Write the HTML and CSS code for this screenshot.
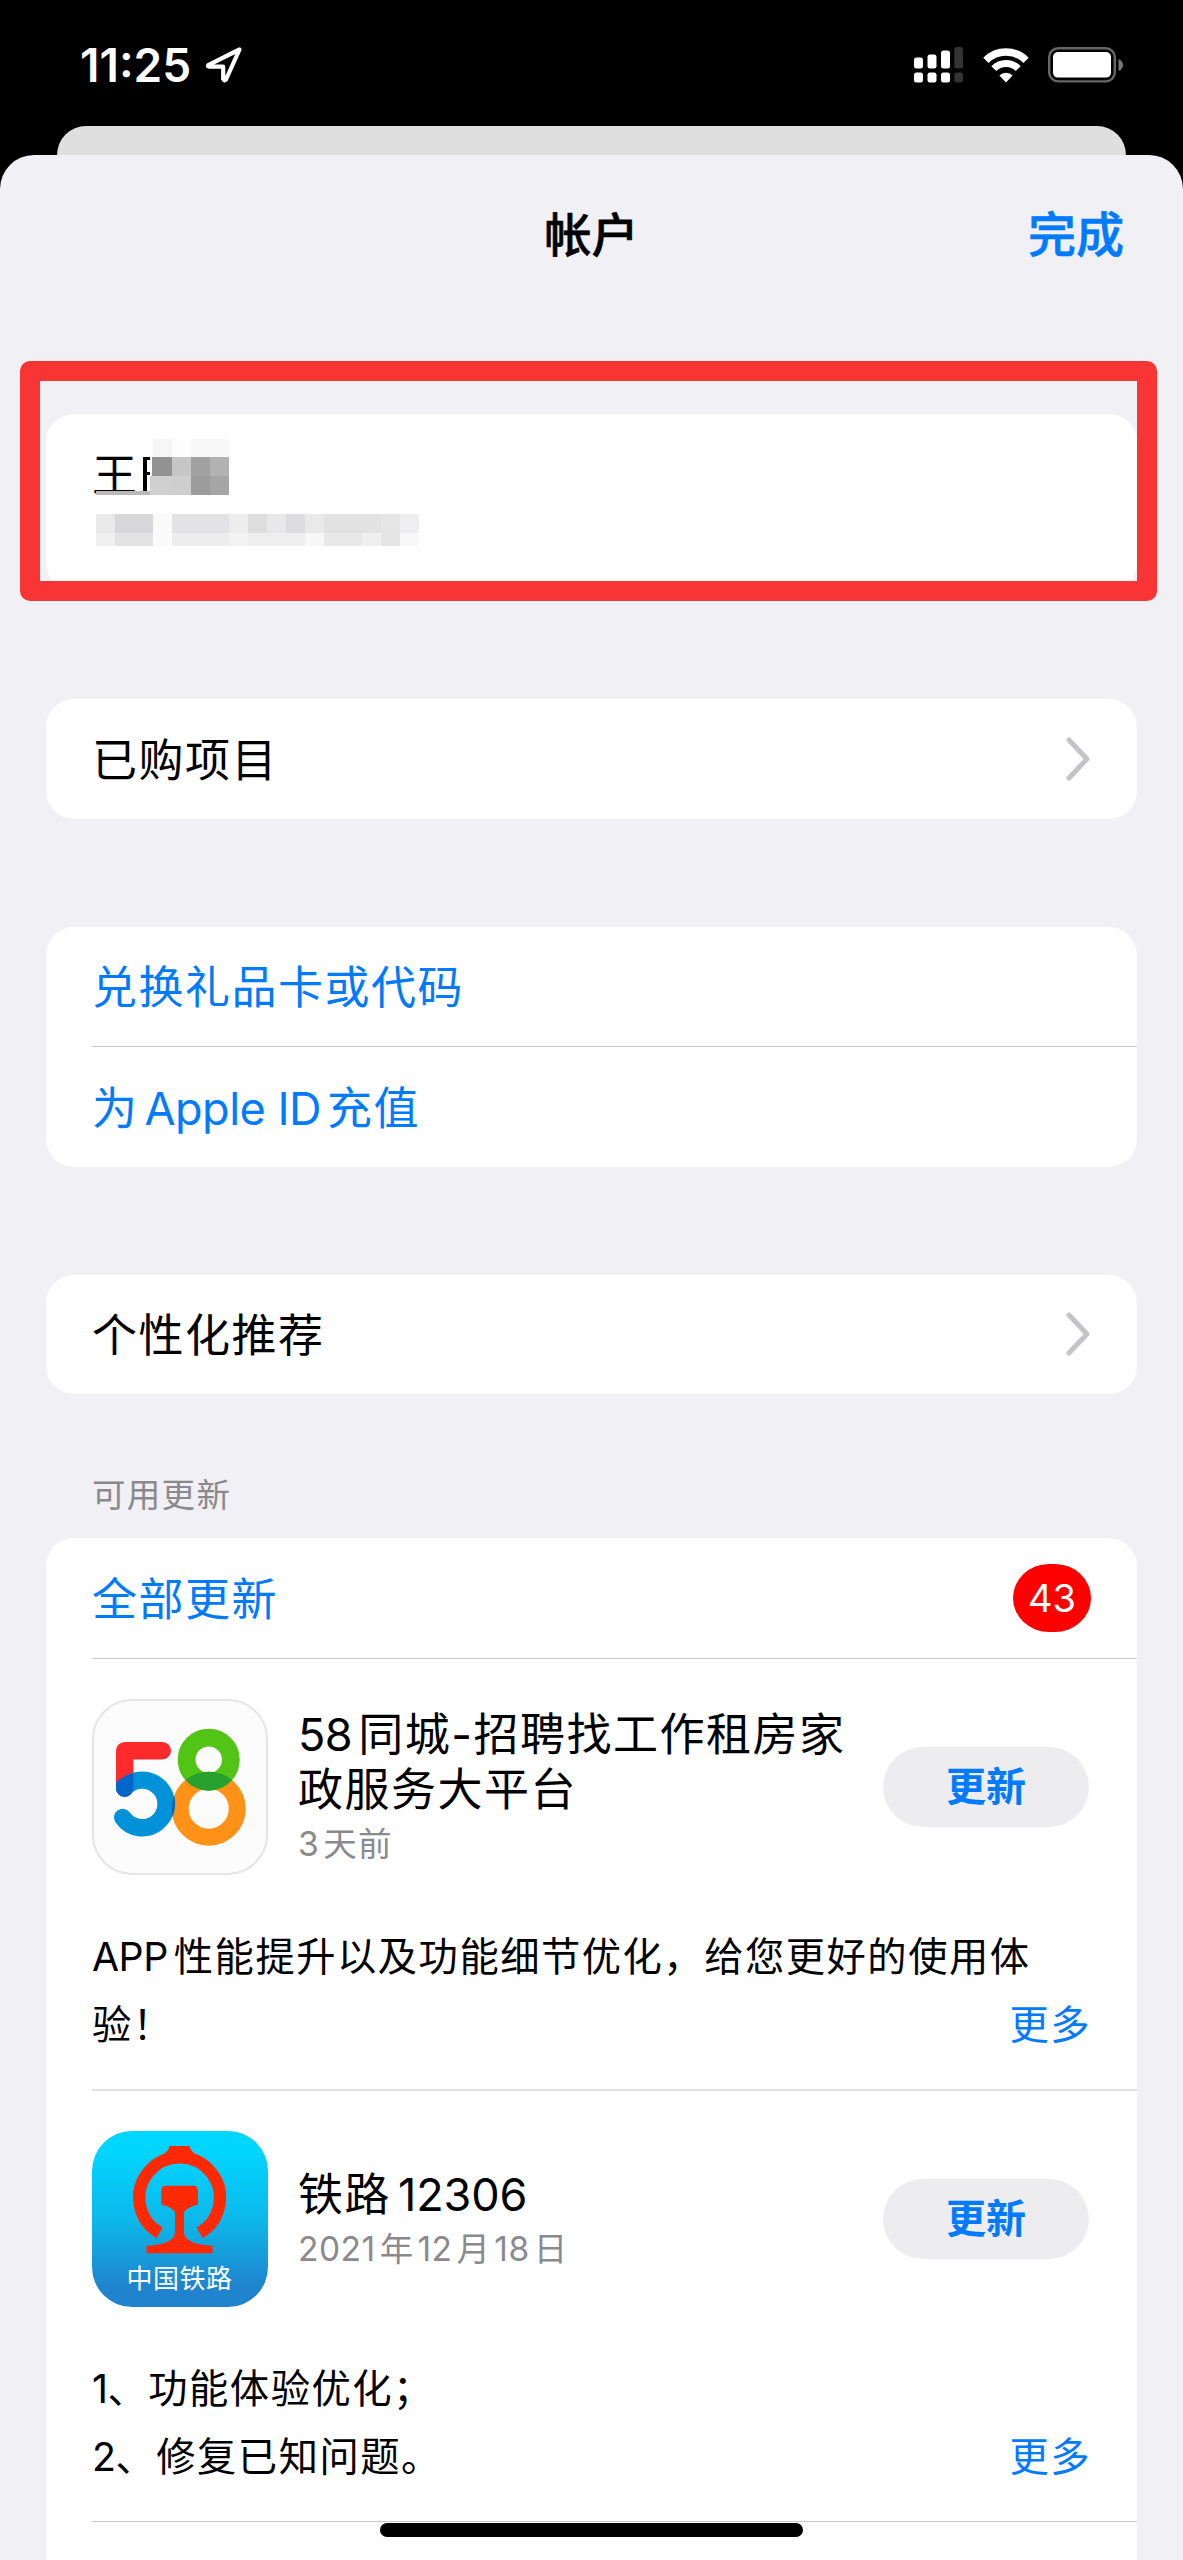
FILE: index.html
```html
<!DOCTYPE html>
<html lang="zh-CN">
<head>
    <meta charset="UTF-8">
    <meta name="viewport" content="width=device-width, initial-scale=1.0">
    <title>帐户</title>
    <link rel="stylesheet" href="styles.css">
</head>
<body>

    <!-- 状态栏 -->
    <div class="status-bar">
        <span class="time">11:25</span>
        <svg class="location" width="38" height="36" viewBox="0 0 38 36">
            <path d="M34.5 2.5L3.2 18.2Q2.2 19.3 4 19.7H18.2V32Q19.3 34.5 21 32.5Z" fill="none" stroke="#fff" stroke-width="4.2" stroke-linejoin="round"/>
        </svg>
        <div class="status-icons">
            <svg width="49" height="36" viewBox="0 0 49 36" fill="#fff">
                <rect x="0" y="10.5" width="9" height="11" rx="2.5"/>
                <rect x="13.5" y="7.5" width="9" height="14" rx="2.5"/>
                <rect x="27" y="3.5" width="9" height="18" rx="2.5"/>
                <rect x="40.3" y="0" width="8.7" height="21.5" rx="2.5" fill="#333"/>
                <rect x="0" y="25.5" width="9" height="10" rx="2.5"/>
                <rect x="13.5" y="25.5" width="9" height="10" rx="2.5"/>
                <rect x="27" y="25.5" width="9" height="10" rx="2.5"/>
                <rect x="40.3" y="25.5" width="8.7" height="10" rx="2.5" fill="#333"/>
            </svg>
            <svg class="wifi" width="46" height="35" viewBox="0 0 46 35">
                <path d="M2.9 12.3A28.5 28.5 0 0 1 43.1 12.3" fill="none" stroke="#fff" stroke-width="7.4"/>
                <path d="M10.8 20.6A17.2 17.2 0 0 1 35.2 20.6" fill="none" stroke="#fff" stroke-width="7"/>
                <path d="M23 34.5L16.4 27.6A9 9 0 0 1 29.6 27.6Z" fill="#fff"/>
            </svg>
            <svg class="battery" width="75" height="36" viewBox="0 0 75 36">
                <rect x="1.2" y="1.2" width="65.6" height="33.2" rx="9" fill="none" stroke="#666" stroke-width="2.4"/>
                <rect x="5" y="5" width="58" height="25.6" rx="5" fill="#fff"/>
                <path d="M70.5 12Q75 14 75 18T70.5 24Z" fill="#777"/>
            </svg>
        </div>
    </div>

    <div class="back-sheet"></div>

    <div class="sheet">
        <div class="sheet-header">
            <h1>帐户</h1>
            <a class="done">完成</a>
        </div>

        <!-- 帐户信息 -->
        <div class="card profile">
            <div class="name">王</div>
            <svg class="mosaic" width="350" height="112" viewBox="0 0 350 112" shape-rendering="crispEdges">
                <path d="M51 19H58V22H55V34H58V37H55V53H51Z" fill="#000"/>
                <path d="M4 53H61V57H4Z" fill="#b9b9b9"/>
                <path d="M61 1H80V19H61Z" fill="#f6f6f6"/>
                <path d="M80 1H99V19H80Z" fill="#fdfdfd"/>
                <path d="M99 1H137V19H99Z" fill="#f8f8f8"/>
                <path d="M60 19H80V38H60Z" fill="#929292"/>
                <path d="M80 19H99V38H80Z" fill="#c6c6c6"/>
                <path d="M99 19H118V38H99Z" fill="#a1a1a1"/>
                <path d="M118 19H137V38H118Z" fill="#b2b2b2"/>
                <path d="M58 38H80V57H58Z" fill="#d0d0d0"/>
                <path d="M80 38H99V57H80Z" fill="#cecece"/>
                <path d="M99 38H118V57H99Z" fill="#9c9c9c"/>
                <path d="M118 38H137V57H118Z" fill="#a6a6a6"/>
                <path d="M4 76H23V95H4Z" fill="#e9e9ea"/>
                <path d="M23 76H61V95H23Z" fill="#d7d7d9"/>
                <path d="M61 76H80V108H61Z" fill="#fafafa"/>
                <path d="M80 76H137V95H80Z" fill="#e3e3e5"/>
                <path d="M137 76H156V95H137Z" fill="#ededee"/>
                <path d="M156 76H175V95H156Z" fill="#dededf"/>
                <path d="M175 76H194V95H175Z" fill="#e8e8ea"/>
                <path d="M194 76H213V95H194Z" fill="#dcdcde"/>
                <path d="M213 76H232V95H213Z" fill="#e9e9e9"/>
                <path d="M232 76H289V95H232Z" fill="#e2e2e3"/>
                <path d="M289 76H308V95H289Z" fill="#e6e6e6"/>
                <path d="M308 76H327V95H308Z" fill="#eeeef0"/>
                <path d="M4 95H23V108H4Z" fill="#f0f0f0"/>
                <path d="M23 95H61V108H23Z" fill="#e3e3e4"/>
                <path d="M80 95H137V108H80Z" fill="#ededed"/>
                <path d="M137 95H156V108H137Z" fill="#f3f3f3"/>
                <path d="M156 95H213V108H156Z" fill="#eeeeee"/>
                <path d="M213 95H232V108H213Z" fill="#f7f7f7"/>
                <path d="M232 95H270V108H232Z" fill="#e8e8e8"/>
                <path d="M270 95H289V108H270Z" fill="#efefef"/>
                <path d="M289 95H308V108H289Z" fill="#e5e5e5"/>
                <path d="M308 95H327V108H308Z" fill="#f8f8f8"/>
            </svg>
            <div class="highlight"></div>
        </div>

        <div class="card">
            <div class="row">
                <span class="label">已购项目</span>
                <svg class="chevron" width="24" height="44" viewBox="0 0 24 44"><path d="M3 3L21 22L3 41"/></svg>
            </div>
        </div>

        <div class="card">
            <div class="row link"><span class="label">兑换礼品卡或代码</span></div>
            <div class="divider"></div>
            <div class="row link"><span class="label">为<span class="en apple">Apple ID</span>充值</span></div>
        </div>

        <div class="card">
            <div class="row">
                <span class="label">个性化推荐</span>
                <svg class="chevron" width="24" height="44" viewBox="0 0 24 44"><path d="M3 3L21 22L3 41"/></svg>
            </div>
        </div>

        <!-- 可用更新 -->
        <div class="section-title">可用更新</div>
        <div class="card updates">
            <div class="row link">
                <span class="label">全部更新</span>
                <span class="badge">43</span>
            </div>
            <div class="divider"></div>

            <div class="app">
                <div class="app-info">
                    <svg class="app-icon" width="176" height="176" viewBox="0 0 176 176">
                        <rect x="1" y="1" width="174" height="174" rx="39" fill="#fcfcfc" stroke="#e5e5e5" stroke-width="2"/>
                        <g fill="none" stroke-linecap="round" stroke-linejoin="round">
                            <path d="M70.3 51.7H32.7V89" stroke="#ff2a2c" stroke-width="17.4"/>
                            <circle cx="116.7" cy="109.7" r="28.5" stroke="#ff9217" stroke-width="17"/>
                            <circle cx="116.7" cy="60.7" r="22.1" stroke="#52c415" stroke-width="17.8"/>
                            <path d="M32.6 89A23.8 23.8 0 1 1 30.7 118.5" stroke="#0092d8" stroke-width="17.4"/>
                        </g>
                        <path d="M93.3 81A37 37 0 0 1 140.1 81A31 31 0 0 1 93.3 81Z" fill="#28a02e"/>
                        <path d="M24 83.5Q31.5 76.5 41.4 74.3V89A8.7 8.7 0 0 1 24 89Z" fill="#0364c9"/>
                        <path d="M82.1 96.5A32.5 32.5 0 0 1 80.5 117.9A37 37 0 0 1 82.1 96.5Z" fill="#0b68b5"/>
                    </svg>
                    <div class="app-text">
                        <div class="app-name"><span class="en">58</span>同城-招聘找工作租房家<br>政服务大平台</div>
                        <div class="app-date"><span class="en">3</span>天前</div>
                    </div>
                    <a class="btn">更新</a>
                </div>
                <div class="app-notes">
                    <p><span class="en">APP</span>性能提升以及功能细节优化，给您更好的使用体<br>验！</p>
                    <a class="more">更多</a>
                </div>
            </div>
            <div class="divider light"></div>

            <div class="app">
                <div class="app-info">
                    <svg class="app-icon" width="176" height="176" viewBox="0 0 176 176">
                        <defs>
                            <linearGradient id="sky" x1="0" y1="0" x2="0" y2="1">
                                <stop offset="0.1" stop-color="#00d6ff"/>
                                <stop offset="0.5" stop-color="#0cb9eb"/>
                                <stop offset="0.88" stop-color="#1f84cd"/>
                            </linearGradient>
                        </defs>
                        <rect width="176" height="176" rx="40" fill="url(#sky)"/>
                        <path d="M67.6 101.9A40.4 40.4 0 1 1 107.6 101.9" fill="none" stroke="#ff2a04" stroke-width="12.2"/>
                        <path d="M77.5 15H97.5Q98.8 20 102 22H73Q76.2 20 77.5 15Z" fill="#ff2a04"/>
                        <path d="M74 54.7H101Q106 54.7 106 60V73.5Q93 77 92 82V101C92 110 104 114 120.5 114.7V122.3H54.5V114.7C71 114 83 110 83 101V82Q82 77 69.3 73.5V60Q69.3 54.7 74 54.7Z" fill="#ff2a04"/>
                        <text class="rail-text" x="87.5" y="157" text-anchor="middle">中国铁路</text>
                    </svg>
                    <div class="app-text">
                        <div class="app-name">铁路<span class="en number">12306</span></div>
                        <div class="app-date"><span class="en">2021</span>年<span class="en">12</span>月<span class="en">18</span>日</div>
                    </div>
                    <a class="btn">更新</a>
                </div>
                <div class="app-notes">
                    <p><span class="index">1</span>、功能体验优化；<br><span class="index">2</span>、修复已知问题。</p>
                    <a class="more">更多</a>
                </div>
            </div>
            <div class="divider"></div>
        </div>
    </div>

    <div class="home-indicator"></div>

</body>
</html>
```
FILE: styles.css
```css
* {
    margin: 0;
    padding: 0;
    box-sizing: border-box;
}

body {
    position: relative;
    width: 1183px;
    height: 2560px;
    overflow: hidden;
    background-color: #000;
    color: #000;
    font-family: Inter, "Noto Sans CJK SC", sans-serif;
    font-size: 45px;
}

a {
    color: #007aff;
    text-decoration: none;
}

/* 状态栏 */
.status-bar {
    display: flex;
    align-items: center;
    height: 126px;
    padding: 4px 60px 0 80px;
    color: #fff;
}

.time {
    width: 125px;
    font-size: 46px;
    font-weight: 600;
    line-height: 54px;
    white-space: nowrap;
}

.status-icons {
    display: flex;
    align-items: center;
    margin-left: auto;
}

.wifi {
    margin-left: 20px;
}

.battery {
    margin-left: 19px;
}

/* 弹出层 */
.back-sheet {
    height: 29px;
    margin: 0 57px;
    border-radius: 30px 30px 0 0;
    background-color: #dfdfdf;
}

.sheet {
    height: 2405px;
    padding: 0 46px;
    overflow: hidden;
    border-radius: 34px 34px 0 0;
    background-color: #f1f0f5;
}

.sheet-header {
    display: grid;
    grid-template-columns: 1fr auto 1fr;
    align-items: center;
    height: 156px;
    padding-top: 3px;
    margin-bottom: 103px;
    line-height: 60px;
}

.sheet-header h1 {
    grid-column: 2;
    font-size: 47px;
    font-weight: 500;
    -webkit-text-stroke: 0.6px #000;
}

.done {
    justify-self: end;
    margin-right: 13px;
    font-size: 48px;
    font-weight: 500;
    -webkit-text-stroke: 0.6px #007aff;
}

.card {
    margin-bottom: 108px;
    border-radius: 28px;
    background-color: #fff;
}

.row {
    display: flex;
    align-items: center;
    height: 119.5px;
    padding: 0 46px;
    letter-spacing: 1.5px;
    line-height: 60px;
}

.label {
    padding-top: 4px;
}

.link {
    color: #007aff;
}

.chevron {
    margin-left: auto;
    margin-right: 1px;
    fill: none;
    stroke: #c4c4c6;
    stroke-width: 5;
    stroke-linecap: round;
    stroke-linejoin: round;
}

.divider {
    height: 1px;
    margin-left: 46px;
    background-color: #c8c8cb;
}

.light {
    height: 2px;
    background-color: #e0e0e1;
}

/* 帐户信息 */
.profile {
    position: relative;
    height: 177px;
    padding: 32px 46px;
}

.name {
    line-height: 60px;
}

.mosaic {
    position: absolute;
    left: 46px;
    top: 24px;
}

.highlight {
    position: absolute;
    left: -26px;
    top: -53px;
    width: 1137px;
    height: 240px;
    border: 20px solid #f83434;
    border-radius: 10px;
}

/* 更新 */
.section-title {
    height: 73px;
    margin: -37px 46px 0;
    color: #8a8a8e;
    font-size: 33.5px;
    letter-spacing: 1.3px;
    line-height: 60px;
}

.updates {
    height: 1100px;
}

.badge {
    width: 78px;
    height: 68px;
    margin-left: auto;
    border-radius: 36px / 34px;
    background-color: #ff0000;
    color: #fff;
    font-size: 38px;
    letter-spacing: 0;
    line-height: 68px;
    text-align: center;
}

.app {
    height: 430px;
    padding: 40px 48px 0 46px;
}

.app-info {
    display: flex;
    align-items: center;
    height: 176px;
}

.app-icon {
    flex: none;
}

.app-text {
    flex: 1;
    margin-left: 30px;
    padding-top: 6px;
}

.app-name {
    width: 560px;
    letter-spacing: 1.5px;
    line-height: 55px;
}

.app-date {
    color: #8a8a8e;
    font-size: 33.5px;
    letter-spacing: 1.3px;
    line-height: 55px;
}

.app-date .en {
    margin-right: 4px;
    letter-spacing: 0.5px;
}

.app-date .en + .en {
    margin-left: 3px;
}

.btn {
    width: 206px;
    height: 80px;
    border-radius: 40px;
    background-color: #ededef;
    font-size: 40px;
    font-weight: 700;
    line-height: 80px;
    text-align: center;
}

.app-notes {
    display: flex;
    align-items: flex-end;
    justify-content: space-between;
    margin-top: 48px;
    font-size: 39.3px;
    letter-spacing: 1.5px;
    line-height: 68.5px;
    white-space: nowrap;
}

.app-notes p {
    width: 900px;
}

.more {
    margin-right: -2px;
}

.en {
    margin-right: 6px;
    letter-spacing: -0.5px;
}

.apple {
    margin-left: 6px;
    margin-right: 6px;
}

.number {
    margin-left: 7px;
    letter-spacing: -0.1px;
}

.index {
    letter-spacing: -0.5px;
}

.rail-text {
    fill: #fff;
    font-size: 26px;
    letter-spacing: 0.5px;
}

.home-indicator {
    position: absolute;
    left: 380px;
    bottom: 23px;
    width: 423px;
    height: 14px;
    border-radius: 7px;
    background-color: #000;
}
```
